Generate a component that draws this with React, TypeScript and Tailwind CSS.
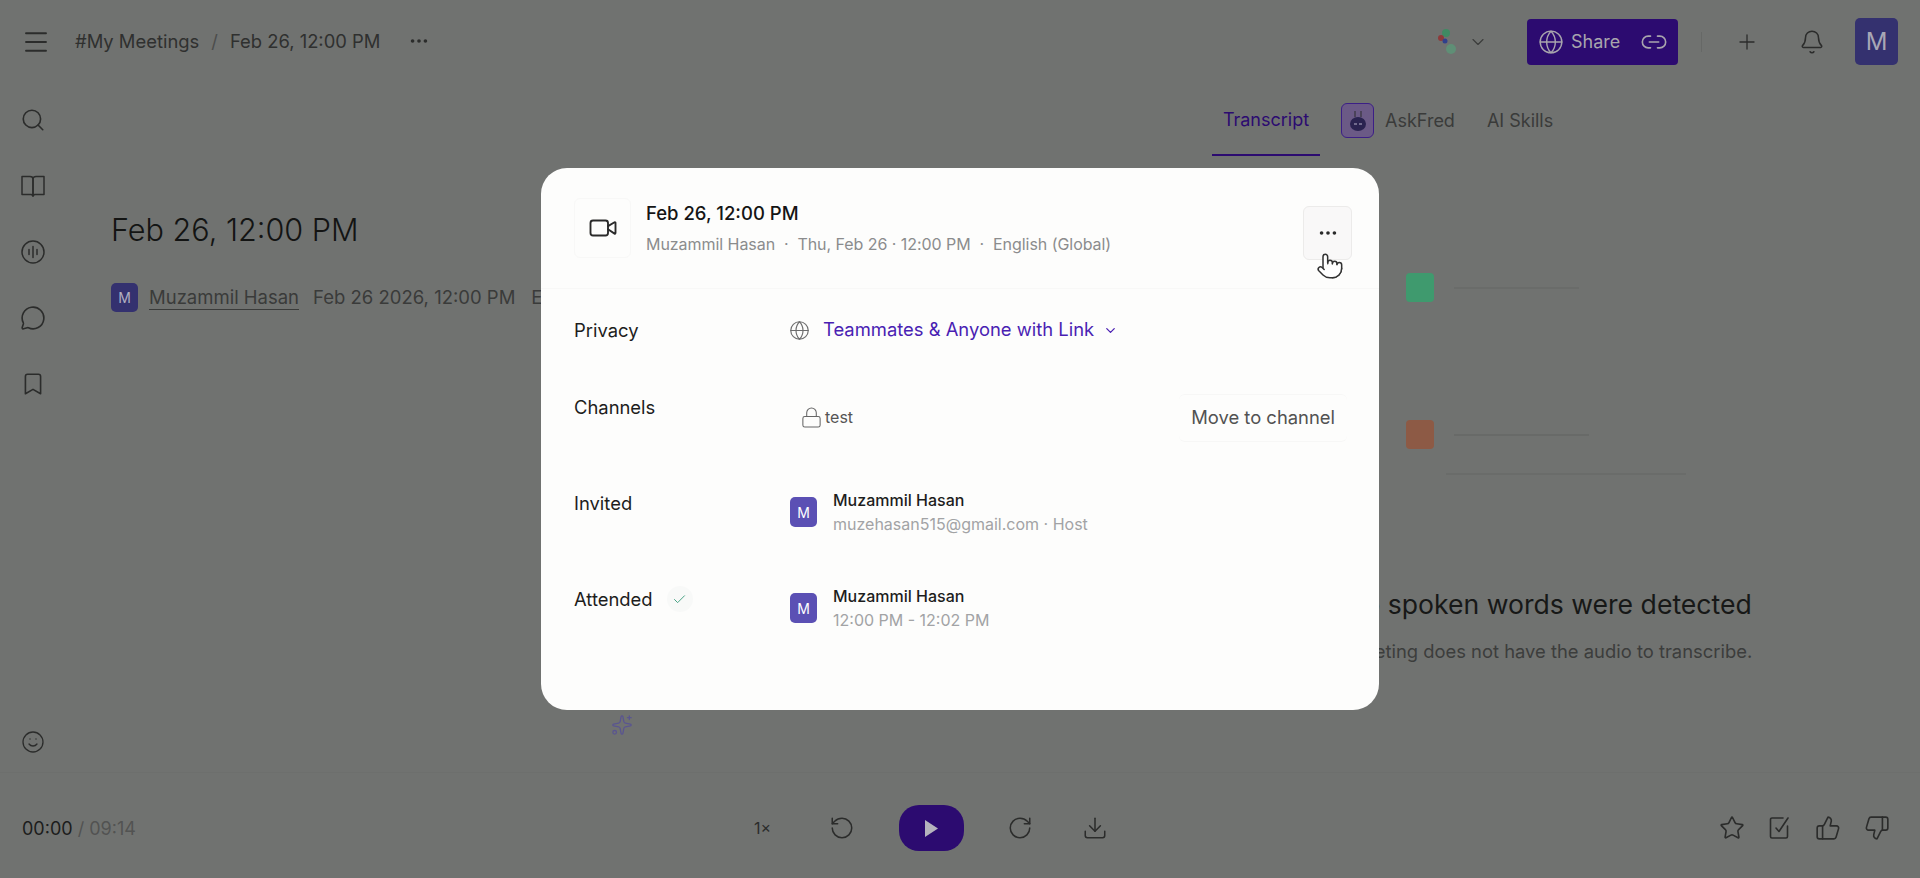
import React from "react";
import {
  Bell,
  Bookmark,
  Check,
  ChevronDown,
  Download,
  Ellipsis,
  Globe,
  Link2,
  Lock,
  Menu,
  MessageCircle,
  Plus,
  Pointer,
  RotateCcw,
  RotateCw,
  Search,
  Smile,
  Sparkles,
  Star,
  ThumbsDown,
  ThumbsUp,
  Video,
} from "lucide-react";

const font = { fontFamily: "Inter, 'Noto Sans', sans-serif" };

function BookIcon() {
  return (
    <svg width="26" height="26" viewBox="0 0 26 26" fill="none" stroke="#2b2c2b" strokeWidth="1.5" strokeLinejoin="round">
      <path d="M2 3.5h8c1.7 0 3 .8 3 2.5v17l-1.5-1.5H2z" />
      <path d="M24 3.5h-8c-1.7 0-3 .8-3 2.5v17l1.5-1.5H24z" />
    </svg>
  );
}

function WaveIcon() {
  return (
    <svg width="26" height="26" viewBox="0 0 26 26" fill="none" stroke="#2b2c2b" strokeWidth="1.5" strokeLinecap="round">
      <circle cx="13" cy="13" r="11" />
      <path d="M9 10.5v5M13 7.5v11M17 10.5v5" />
    </svg>
  );
}

function TaskIcon() {
  return (
    <svg width="24" height="26" viewBox="0 0 24 26" fill="none" stroke="#2b2c2b" strokeWidth="1.6" strokeLinecap="round" strokeLinejoin="round">
      <path d="M15 3H4a1.500 1.500 0 0 0-1.500 1.500v17A1.500 1.500 0 0 0 4 23h14a1.500 1.500 0 0 0 1.500-1.500V11" />
      <path d="M8 13l3 3.500L20 3" />
    </svg>
  );
}

function AppLogo() {
  return (
    <svg width="26" height="28" viewBox="0 0 26 28">
      <circle cx="10" cy="5" r="4" fill="#3f8a63" />
      <circle cx="5" cy="10" r="3" fill="#8d3a3a" />
      <circle cx="9" cy="13" r="2.500" fill="#30408c" />
      <circle cx="15" cy="21" r="5" fill="#5f8f76" />
    </svg>
  );
}

function BotIcon() {
  return (
    <div className="flex h-[35px] w-[33px] items-center justify-center rounded-md border border-[#3c1f86] bg-[#6b5a86]">
      <svg width="22" height="26" viewBox="0 0 22 26" fill="none">
        <path d="M8 3v6M14 3v6" stroke="#2c2c2c" strokeWidth="1" />
        <ellipse cx="11" cy="16" rx="8" ry="7" fill="#2a2350" />
        <path d="M7 16h3M12 16h3" stroke="#b7b3c9" strokeWidth="1.2" />
      </svg>
    </div>
  );
}

function Avatar({ className }: { className: string }) {
  return (
    <div className={`flex items-center justify-center rounded-[5px] ${className}`}>M</div>
  );
}

function InfoRow({
  label,
  extra,
  className,
  labelClassName,
  children,
}: {
  label: string;
  extra?: React.ReactNode;
  className: string;
  labelClassName?: string;
  children: React.ReactNode;
}) {
  return (
    <div className={`flex pl-[33px] pr-[32px] ${className}`}>
      <div
        className={`flex w-[216px] shrink-0 items-start gap-[14px] text-[18.4px] leading-[26px] text-[#1d1d1d] ${labelClassName ?? ""}`}
      >
        {label}
        {extra}
      </div>
      <div className="flex min-w-0 flex-1">{children}</div>
    </div>
  );
}

function Person({ sub }: { sub: string }) {
  return (
    <div className="flex items-center gap-[16px]">
      <Avatar className="h-[30px] w-[27px] bg-[#5b50b4] text-[14px] text-white" />
      <div className="flex flex-col">
        <span className="text-[16px] font-medium leading-[23px] text-[#1d1d1d]">Muzammil Hasan</span>
        <span className="text-[16px] leading-[24px] text-[#a2a3a5]">{sub}</span>
      </div>
    </div>
  );
}

function MeetingModal() {
  return (
    <div className="absolute inset-0 flex items-center justify-center">
      <div className="relative flex h-[542px] w-[838px] flex-col rounded-[26px] bg-[#fdfdfc]">
        <div className="flex h-[121px] shrink-0 items-start border-b border-[#f8f8f7] pl-[33px] pr-[27px] pt-[30px]">
          <div className="flex h-[60px] w-[57px] items-center justify-center rounded-md border border-[#f8f8f7]">
            <Video size={30} strokeWidth={1.5} color="#2a2a2a" />
          </div>
          <div className="ml-[15px] flex flex-col">
            <span className="text-[18.5px] font-medium leading-[30px] text-[#151515]">Feb 26, 12:00 PM</span>
            <span className="mt-[4px] text-[16px] leading-[24px] tracking-[-0.05px] text-[#8b8c8d]">
              Muzammil Hasan&nbsp; · &nbsp;Thu, Feb 26 · 12:00 PM&nbsp; · &nbsp;English (Global)
            </span>
          </div>
          <div className="ml-auto mt-[8px] flex h-[54px] w-[49px] items-center justify-center rounded-md border border-[#ecebea] bg-[#f9f8f8]">
            <Ellipsis size={22} color="#2a2a2a" />
          </div>
        </div>

        <InfoRow label="Privacy" className="mt-[28px] h-[50px]">
          <div className="flex h-[26px] items-center">
            <Globe size={21} strokeWidth={1.3} color="#6d6d6d" className="ml-[-1px]" />
            <span className="ml-[13px] text-[18.4px] text-[#4a1fb3]">Teammates &amp; Anyone with Link</span>
            <ChevronDown size={15} color="#4a1fb3" className="ml-[9px]" />
          </div>
        </InfoRow>

        <InfoRow label="Channels" className="mt-[15px] h-[81px]" labelClassName="pt-[12px]">
          <div className="flex w-full items-start justify-between">
            <div className="mt-[23px] flex items-center gap-[2px] pl-[10px] text-[16px] text-[#555]">
              <Lock size={23} strokeWidth={1.1} color="#666" />
              test
            </div>
            <div className="mt-[12px] flex h-[48px] items-center rounded-md border-y border-[#f7f7f6] px-[12px] text-[18.4px] text-[#525252]">
              Move to channel
            </div>
          </div>
        </InfoRow>

        <InfoRow label="Invited" className="mt-[1px] h-[96px]" labelClassName="pt-[26px]">
          <Person sub="muzehasan515@gmail.com · Host" />
        </InfoRow>

        <InfoRow
          label="Attended"
          className="h-[96px]"
          labelClassName="pt-[26px]"
          extra={
            <span className="flex h-[26px] w-[26px] items-center justify-center rounded-full bg-[#f8f9f8]">
              <Check size={15} strokeWidth={1.5} color="#3c9c7c" />
            </span>
          }
        >
          <Person sub="12:00 PM - 12:02 PM" />
        </InfoRow>

        <Pointer
          size={28}
          strokeWidth={1.3}
          color="#333"
          fill="#ffffff"
          className="absolute left-[775px] top-[84px]"
        />
      </div>
      <Sparkles size={22} strokeWidth={1.4} color="#5a5590" className="absolute left-[611px] top-[714px]" />
    </div>
  );
}

export default function App() {
  return (
    <div
      style={font}
      className="relative flex h-[878px] w-[1920px] flex-col overflow-hidden bg-[#707270] text-[#2b2c2b]"
    >
      <header className="flex h-[83px] shrink-0 items-center pl-[21px] pr-[22px]">
        <Menu size={30} strokeWidth={1.5} color="#2b2c2b" />
        <div className="ml-[24px] flex items-center text-[18.4px] text-[#2f302f]">
          <span>#My Meetings</span>
          <span className="mx-[12px] text-[#4c4d4c]">/</span>
          <span>Feb 26, 12:00 PM</span>
          <Ellipsis size={22} color="#2b2c2b" className="ml-[28px]" />
        </div>

        <div className="ml-auto flex items-center">
          <AppLogo />
          <ChevronDown size={20} strokeWidth={1.4} color="#3c3d3c" className="ml-[6px]" />
          <div className="ml-[39px] flex h-[46px] w-[151px] items-center rounded-[4px] bg-[#2c0b70] pl-[11px] text-[18px] text-[#a8a5ad]">
            <Globe size={26} strokeWidth={1.3} color="#a8a5ad" />
            <span className="ml-[7px]">Share</span>
            <Link2 size={28} strokeWidth={1.4} color="#a8a5ad" className="ml-[20px]" />
          </div>
          <div className="ml-[23px] h-[20px] w-px bg-[#666866]" />
          <Plus size={24} strokeWidth={1.3} color="#2b2c2b" className="ml-[33px]" />
          <Bell size={26} strokeWidth={1.4} color="#2b2c2b" className="ml-[40px]" />
          <Avatar className="ml-[30px] h-[47px] w-[43px] bg-[#34316f] text-[24px] text-[#a8a7b5]" />
        </div>
      </header>

      <div className="flex min-h-0 flex-1">
        <aside className="flex w-[66px] shrink-0 flex-col items-center pt-[24px] pb-[18px]">
          <div className="flex flex-col items-center gap-[40px]">
            <Search size={26} strokeWidth={1.5} color="#2b2c2b" />
            <BookIcon />
            <WaveIcon />
            <MessageCircle size={26} strokeWidth={1.5} color="#2b2c2b" />
            <Bookmark size={26} strokeWidth={1.5} color="#2b2c2b" />
          </div>
          <Smile size={24} strokeWidth={1.3} color="#2b2c2b" className="mt-auto" />
        </aside>

        <main className="min-w-0 flex-1 pl-[45px] pt-[127px]">
          <h1 className="text-[30.6px] font-light leading-[40px] text-[#131413]">Feb 26, 12:00 PM</h1>
          <div className="mt-[33px] flex items-center whitespace-nowrap text-[18.5px] text-[#3a3b3a]">
            <Avatar className="h-[29px] w-[27px] bg-[#34316f] text-[14px] text-[#b0afc0]" />
            <span className="ml-[11px] border-b border-[#3a3b3a] leading-[24px]">Muzammil Hasan</span>
            <span className="ml-[14px]">Feb 26 2026, 12:00 PM</span>
            <span className="ml-[16px]">English</span>
          </div>
        </main>

        <section className="flex w-[708px] shrink-0 flex-col">
          <nav className="flex h-[73px] items-center pt-[2px] text-[18px]">
            <div className="relative flex h-full w-[108px] items-center justify-center border-b-2 border-[#2c0b70] text-[#2c0b70]">
              Transcript
            </div>
            <div className="ml-[21px] flex items-center gap-[11px] text-[#3a3b3a]">
              <BotIcon />
              AskFred
            </div>
            <span className="ml-[32px] text-[#3a3b3a]">AI Skills</span>
          </nav>

          <div className="ml-[194px] mt-[117px] flex items-start gap-[20px]">
            <div className="h-[29px] w-[28px] rounded-[4px] bg-[#3f9a6e]" />
            <div className="mt-[14px] h-[2px] w-[125px] bg-[#6a6c6a]" />
          </div>
          <div className="ml-[194px] mt-[118px] flex items-start gap-[20px]">
            <div className="h-[29px] w-[28px] rounded-[4px] bg-[#8d5a45]" />
            <div className="mt-[14px] h-[2px] w-[135px] bg-[#686a68]" />
          </div>
          <div className="ml-[234px] mt-[24px] h-[2px] w-[240px] bg-[#6a6c6a]" />

          <div className="mt-[111px] pr-[36px] text-center">
            <p className="text-[26.6px] leading-[36px] text-[#171817]">No spoken words were detected</p>
            <p className="mr-[38px] mt-[16px] text-[18.4px] leading-[26px] text-[#3c3d3c]">
              This meeting does not have the audio to transcribe.
            </p>
          </div>
        </section>
      </div>

      <footer className="flex h-[106px] shrink-0 items-center border-t border-[#6d6f6d] pl-[22px] pr-[30px] pt-[5px]">
        <div className="w-[732px] text-[18px] text-[#1c1d1c]">
          00:00 <span className="text-[#525352]">/ 09:14</span>
        </div>
        <span className="text-[16px] text-[#2b2c2b]">1×</span>
        <RotateCcw size={26} strokeWidth={1.4} color="#2b2c2b" className="ml-[58px]" />
        <div className="ml-[44px] flex h-[46px] w-[65px] items-center justify-center rounded-[20px] bg-[#2c0b70]">
          <svg width="15" height="19" viewBox="0 0 15 19">
            <path d="M1 1l13 8.500-13 8.500z" fill="#b5b3bd" />
          </svg>
        </div>
        <RotateCw size={26} strokeWidth={1.4} color="#2b2c2b" className="ml-[43px]" />
        <Download size={26} strokeWidth={1.4} color="#2b2c2b" className="ml-[49px]" />
        <div className="ml-auto flex items-center gap-[23px]">
          <Star size={26} strokeWidth={1.5} color="#2b2c2b" />
          <TaskIcon />
          <ThumbsUp size={26} strokeWidth={1.5} color="#2b2c2b" />
          <ThumbsDown size={26} strokeWidth={1.5} color="#2b2c2b" />
        </div>
      </footer>

      <MeetingModal />
    </div>
  );
}
